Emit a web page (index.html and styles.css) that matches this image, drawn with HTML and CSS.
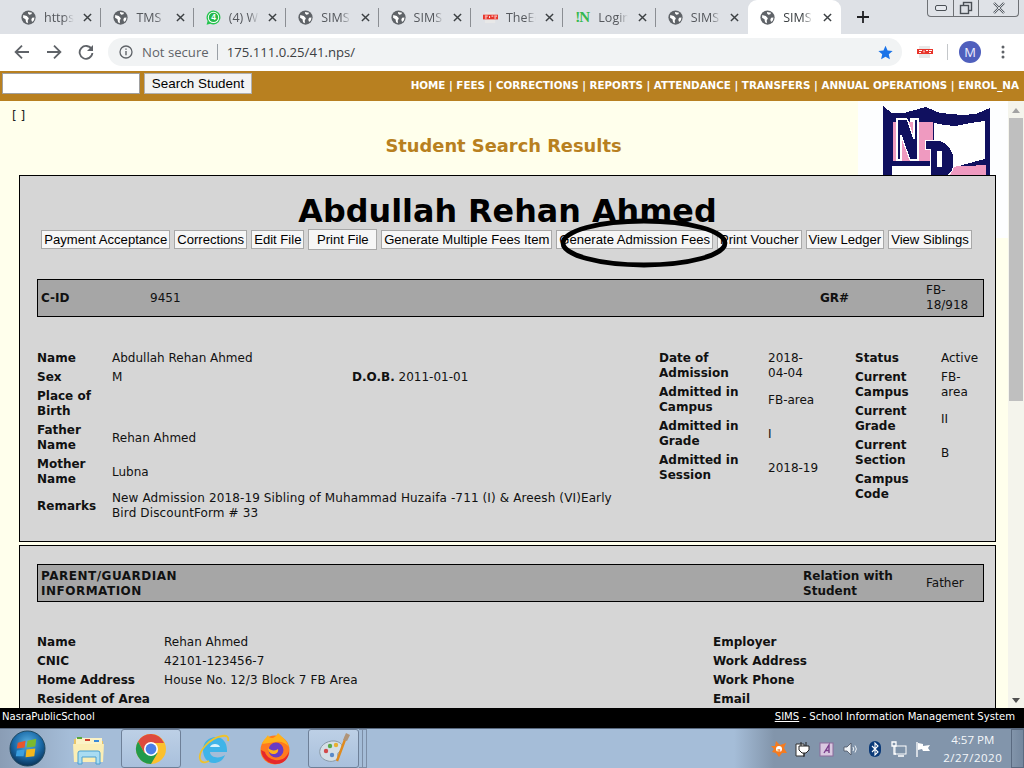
FILE: index.html
```html
<!DOCTYPE html>
<html lang="en">
<head>
<meta charset="utf-8">
<title>SIMS</title>
<link rel="stylesheet" href="styles.css">
</head>
<body>
<svg class="defs" width="0" height="0" aria-hidden="true">
  <defs>
    <symbol id="globe" viewBox="0 0 16 16">
      <circle cx="8" cy="8" r="7.6" fill="#5f6368"/>
      <path d="M2.400 5.400 6.200 6.400 8.400 8.800 7.200 11.200 7.400 14 5.400 13 4.800 9.800 2.200 8.200ZM7.400 2 11.800 2.800 11 4.400 8.800 5 7.600 3.800ZM11.800 8.200 14.400 8 13.800 10.800 11.800 12.800 11 10.400Z" fill="#fff"/>
    </symbol>
    <symbol id="close" viewBox="0 0 10 10">
      <path d="M1 1 9 9M9 1 1 9" stroke="#3c4043" stroke-width="1.600" fill="none"/>
    </symbol>
    <symbol id="pdf" viewBox="0 0 16 12">
      <rect x="2" y="0" width="11" height="12" fill="#e8e8e8"/>
      <rect x="0" y="3" width="16" height="5" fill="#e8352b"/>
      <path d="M2 4.500h3M2 6.500h2M7 4.500v2M9 4.500h2M12 4.500h3M12 6.500h2" stroke="#fff" stroke-width="1"/>
    </symbol>
  </defs>
</svg>

<header class="tabstrip">
  <div class="tab"><svg class="fav"><use href="#globe"/></svg><span class="tab-title">https:</span><svg class="x"><use href="#close"/></svg></div>
  <div class="tab"><svg class="fav"><use href="#globe"/></svg><span class="tab-title">TMS</span><svg class="x"><use href="#close"/></svg></div>
  <div class="tab"><svg class="fav" viewBox="0 0 16 16"><path d="M8 .4a7.500 7.500 0 0 0-6.300 11.400L.6 15.600l3.900-1A7.500 7.500 0 1 0 8 .4Z" fill="#25c44f"/><circle cx="8" cy="7.900" r="6" fill="#fff"/><circle cx="8" cy="7.900" r="5" fill="#25b84a"/><text x="8" y="11" class="wa-num">4</text></svg><span class="tab-title">(4) W</span><svg class="x"><use href="#close"/></svg></div>
  <div class="tab"><svg class="fav"><use href="#globe"/></svg><span class="tab-title">SIMS</span><svg class="x"><use href="#close"/></svg></div>
  <div class="tab"><svg class="fav"><use href="#globe"/></svg><span class="tab-title">SIMS</span><svg class="x"><use href="#close"/></svg></div>
  <div class="tab"><svg class="fav"><use href="#pdf"/></svg><span class="tab-title">TheEc</span><svg class="x"><use href="#close"/></svg></div>
  <div class="tab"><span class="fav in-logo">!N</span><span class="tab-title">Login</span><svg class="x"><use href="#close"/></svg></div>
  <div class="tab tab-last"><svg class="fav"><use href="#globe"/></svg><span class="tab-title">SIMS</span><svg class="x"><use href="#close"/></svg></div>
  <div class="tab tab-active"><svg class="fav"><use href="#globe"/></svg><span class="tab-title">SIMS</span><svg class="x"><use href="#close"/></svg></div>
  <svg class="newtab" viewBox="0 0 12 12"><path d="M6 0v12M0 6h12" stroke="#202124" stroke-width="1.800"/></svg>
  <div class="winctl">
    <span class="wbtn wmin"><svg viewBox="0 0 14 8"><rect x="1.500" y="1.500" width="11" height="5" rx="1.500" fill="#e6e9ee" stroke="#4a4f55"/></svg></span>
    <span class="wbtn wmax"><svg viewBox="0 0 14 14"><rect x="4.500" y="1.500" width="8" height="8" fill="none" stroke="#4a4f55" stroke-width="1.400"/><rect x="1.500" y="4.500" width="8" height="8" fill="#dee1e6" stroke="#4a4f55" stroke-width="1.400"/></svg></span>
    <span class="wbtn wclose"><svg viewBox="0 0 14 12"><path d="M2 1 12 11M12 1 2 11" stroke="#555b62" stroke-width="2.400"/><path d="M2 1 12 11M12 1 2 11" stroke="#e8eaed" stroke-width=".9"/></svg></span>
  </div>
</header>

<div class="toolbar">
  <svg class="tool" viewBox="0 0 16 16"><path d="M15 8H2M8 1.600 1.600 8 8 14.400" fill="none" stroke="#5f6368" stroke-width="1.800"/></svg>
  <svg class="tool" viewBox="0 0 16 16"><path d="M1 8h13M8 1.600 14.400 8 8 14.400" fill="none" stroke="#5f6368" stroke-width="1.800"/></svg>
  <svg class="tool" viewBox="0 0 16 16"><path d="M13.600 5.200A6.400 6.400 0 1 0 14.400 9" fill="none" stroke="#5f6368" stroke-width="1.800"/><path d="M15 1v6H9Z" fill="#5f6368"/></svg>
  <div class="omnibox">
    <svg class="info" viewBox="0 0 14 14"><circle cx="7" cy="7" r="6" fill="none" stroke="#5f6368" stroke-width="1.300"/><path d="M7 6v4.200M7 3.400v1.400" stroke="#5f6368" stroke-width="1.400"/></svg>
    <span class="notsecure">Not secure</span>
    <span class="omni-sep"></span>
    <span class="url">175.111.0.25/41.nps/</span>
    <svg class="star" viewBox="0 0 16 16"><path d="M8 .8 10.200 5.800 15.600 6.300 11.500 9.900 12.700 15.200 8 12.400 3.300 15.200 4.500 9.900.4 6.300 5.800 5.800Z" fill="#1a73e8"/></svg>
  </div>
  <svg class="ext"><use href="#pdf"/></svg>
  <span class="tool-sep"></span>
  <span class="avatar">M</span>
  <svg class="dots" viewBox="0 0 4 14"><circle cx="2" cy="2" r="1.500" fill="#5f6368"/><circle cx="2" cy="7" r="1.500" fill="#5f6368"/><circle cx="2" cy="12" r="1.500" fill="#5f6368"/></svg>
</div>

<nav class="appbar">
  <form class="search">
    <input class="search-input" type="text" aria-label="Search">
    <button class="search-btn" type="button">Search Student</button>
  </form>
  <div class="menu">HOME | FEES | CORRECTIONS | REPORTS | ATTENDANCE | TRANSFERS | ANNUAL OPERATIONS | ENROL_NA</div>
</nav>

<div class="viewport">
  <main class="content">
    <svg class="logo" viewBox="0 0 150 137" shape-rendering="crispEdges">
      <rect width="150" height="137" fill="#fdfeff"/>
      <path d="M25 5 34 12 46 12 68 6 82 12 104 14 118 13 132 7V110H25Z" fill="#10105f"/>
      <path d="M35 21H75V60H35Z" fill="#ef9ac0"/>
      <path d="M86 24 98 25 112 22 127 20V58L104 64 90 70 76 62V22Z" fill="#fff"/>
      <path d="M34 65H72V110H34Z" fill="#fff"/>
      <path d="M88 66 128 64V75H88Z" fill="#ef9ac0"/>
      <path d="M39 18H49L56 38V20H53V18H60V59H52L43 34V59H39Z" fill="#10105f" stroke="#fff" stroke-width="1.200"/>
      <path d="M67 39H80C90 41 96 50 96 60 96 72 90 76 82 76V110H72V48H67Z" fill="#10105f" stroke="#fff" stroke-width="1"/>
      <path d="M79 50H84V66H79Z" fill="#fff"/>
    </svg>

    <div class="brace">[ ]</div>
    <h2 class="page-title">Student Search Results</h2>

    <section class="card card-student">
      <h1 class="student-name">Abdullah Rehan Ahmed</h1>
      <div class="actions">
        <button class="btn" type="button">Payment Acceptance</button>
        <button class="btn" type="button">Corrections</button>
        <button class="btn" type="button">Edit File</button>
        <button class="btn btn-tall" type="button">Print File</button>
        <button class="btn" type="button">Generate Multiple Fees Item</button>
        <button class="btn" type="button">Generate Admission Fees</button>
        <button class="btn" type="button">Print Voucher</button>
        <button class="btn" type="button">View Ledger</button>
        <button class="btn" type="button">View Siblings</button>
      </div>

      <div class="headbar headbar-id">
        <b class="hb-label hb-cid">C-ID</b>
        <span class="hb-val hb-cidval">9451</span>
        <b class="hb-label hb-gr">GR#</b>
        <span class="hb-val hb-grval">FB-<br>18/918</span>
      </div>

      <div class="details">
        <table class="info info-left">
          <colgroup><col class="c-lab"><col class="c-sex"><col></colgroup>
          <tr><th>Name</th><td colspan="2">Abdullah Rehan Ahmed</td></tr>
          <tr><th>Sex</th><td>M</td><td><b>D.O.B.</b> 2011-01-01</td></tr>
          <tr><th>Place of Birth</th><td colspan="2"></td></tr>
          <tr><th>Father Name</th><td colspan="2">Rehan Ahmed</td></tr>
          <tr><th>Mother Name</th><td colspan="2">Lubna</td></tr>
          <tr><th>Remarks</th><td colspan="2" class="wide-text">New Admission 2018-19 Sibling of Muhammad Huzaifa -711 (I) &amp; Areesh (VI)Early Bird DiscountForm # 33</td></tr>
        </table>
        <table class="info info-mid">
          <tr><th>Date of Admission</th><td>2018-04-04</td></tr>
          <tr><th>Admitted in Campus</th><td>FB-area</td></tr>
          <tr><th>Admitted in Grade</th><td>I</td></tr>
          <tr><th>Admitted in Session</th><td>2018-19</td></tr>
        </table>
        <table class="info info-right">
          <tr><th>Status</th><td>Active</td></tr>
          <tr><th>Current Campus</th><td>FB-area</td></tr>
          <tr><th>Current Grade</th><td>II</td></tr>
          <tr><th>Current Section</th><td>B</td></tr>
          <tr><th>Campus Code</th><td></td></tr>
        </table>
      </div>
      <svg class="circle-mark" viewBox="0 0 168 50"><ellipse cx="84" cy="25" rx="81" ry="22" fill="none" stroke="#000" stroke-width="4.800"/></svg>
    </section>

    <section class="card card-parent">
      <div class="headbar headbar-parent">
        <b class="hb-label hb-parent">PARENT/GUARDIAN INFORMATION</b>
        <b class="hb-label hb-rel">Relation with Student</b>
        <span class="hb-val hb-relval">Father</span>
      </div>
      <div class="details details-parent">
        <table class="info info-pleft">
          <tr><th>Name</th><td>Rehan Ahmed</td></tr>
          <tr><th>CNIC</th><td>42101-123456-7</td></tr>
          <tr><th>Home Address</th><td class="wide-text">House No. 12/3 Block 7 FB Area</td></tr>
          <tr><th>Resident of Area</th><td></td></tr>
        </table>
        <table class="info info-pright">
          <tr><th>Employer</th><td></td></tr>
          <tr><th>Work Address</th><td></td></tr>
          <tr><th>Work Phone</th><td></td></tr>
          <tr><th>Email</th><td></td></tr>
        </table>
      </div>
    </section>
  </main>
  <aside class="scrollbar">
    <span class="arrow-up"></span>
    <span class="thumb"></span>
    <span class="arrow-down"></span>
  </aside>
</div>

<footer class="sitefoot">
  <span>NasraPublicSchool</span>
  <span><u>SIMS</u> - School Information Management System</span>
</footer>

<div class="taskbar">
  <svg class="orb" viewBox="0 0 38 38">
    <defs>
      <radialGradient id="orbg" cx="50%" cy="35%" r="65%"><stop offset="0" stop-color="#5ab0e0"/><stop offset=".6" stop-color="#1a6aa8"/><stop offset="1" stop-color="#0b3358"/></radialGradient>
    </defs>
    <circle cx="19" cy="19" r="18" fill="url(#orbg)" stroke="#20485f"/>
    <path d="M9 13 17 11 16 18 8 19Z" fill="#e8562d"/>
    <path d="M19 11 28 9 27 17 18 18Z" fill="#7bb92f"/>
    <path d="M8 21 16 20 15 27 7 27Z" fill="#3a9fe0"/>
    <path d="M18 20 27 19 26 27 17 28Z" fill="#f3b71c"/>
  </svg>
  <span class="tb-item tb-folder"><svg class="tb-icon" viewBox="0 0 32 32">
    <path d="M1 6h12l2 2h15v21H1Z" fill="#e9c569"/>
    <rect x="3" y="5" width="26" height="8" fill="#fbf3c6"/>
    <rect x="4" y="4" width="5" height="2" fill="#58a83a"/><rect x="12" y="6" width="5" height="2" fill="#d2402c"/><rect x="21" y="7" width="5" height="2" fill="#3a8ad8"/>
    <path d="M0 11h31l-1 18H1Z" fill="#fbeeb5"/>
    <path d="M5 31V20q0-2 2-2h18q2 0 2 2v11h-4V24H9v7Z" fill="#a9dcf2" stroke="#4a9fd0"/>
  </svg></span>
  <span class="tb-item tb-open tb-chrome"><svg class="tb-icon" viewBox="0 0 32 32">
    <circle cx="16" cy="16" r="15" fill="#fbc02d"/>
    <path d="M16 1A15 15 0 0 0 3 8.500L9.500 20 16 10H29A15 15 0 0 0 16 1Z" fill="#dd4b3e"/>
    <path d="M3 8.500A15 15 0 0 0 16 31L22.500 20H9.500Z" fill="#229a4a"/>
    <circle cx="16" cy="16" r="7" fill="#fff"/><circle cx="16" cy="16" r="5.400" fill="#4a7fe8"/>
  </svg></span>
  <span class="tb-item tb-ie"><svg class="tb-icon" viewBox="0 0 32 32">
    <path d="M5 17C5 9 11 4 18 4s11 6 11 13v2H12c0 6 10 7 15 3-2 6-7 8-11 8C9 30 5 24 5 17Z" fill="#3fb4e8"/>
    <path d="M12 14c1-4 9-4 10 0Z" fill="#d8f2fc"/>
    <path d="M2 26C0 18 12 5 24 3c5-1 7 1 6 5" fill="none" stroke="#eec22c" stroke-width="1.800"/>
    <path d="M2 26c1 4 5 4 9 2" fill="none" stroke="#eec22c" stroke-width="1.800"/>
  </svg></span>
  <span class="tb-item tb-ff"><svg class="tb-icon" viewBox="0 0 32 32">
    <circle cx="16" cy="17" r="14.500" fill="#ff7a1f"/>
    <path d="M3 11C5 6 8 4 9 2c1 3 3 3 5 3 4-2 4-4 5-5 3 3 9 7 11 14-3-4-8-6-13-5Z" fill="#ffb21c"/>
    <path d="M2 17c1 10 9 14 15 14 8 0 13-6 13-13-2 7-8 10-14 9-5-1-9-4-10-8Z" fill="#e5282c"/>
    <circle cx="17" cy="17" r="7.500" fill="#6b3bc4"/>
    <path d="M9 15c3 3 8 3 10 1 1 3-2 5-4 5-3 0-6-2-6-6Z" fill="#ffb21c"/>
  </svg></span>
  <span class="tb-item tb-open tb-paint"><svg class="tb-icon" viewBox="0 0 32 32">
    <path d="M2 21C0 14 8 7 17 8c6 1 9 5 6 9-3 3-4 3-3 7-1 4-6 5-10 4-4-1-7-3-8-7Z" fill="#d5dfe6" stroke="#8a9aa8"/>
    <circle cx="8" cy="18" r="2.200" fill="#d24a4a"/><circle cx="12" cy="13" r="2.200" fill="#5aa84a"/><circle cx="18" cy="12" r="2.200" fill="#e8b030"/><circle cx="14" cy="22" r="2.200" fill="#5a8ac8"/>
    <path d="M28 4 19 28" stroke="#e08a1e" stroke-width="2.400"/>
    <path d="M25 7 28 0 32 2 29 8Z" fill="#b09478"/>
  </svg></span>
  <span class="tb-grip"></span>
  <span class="tb-grip"></span>
  <div class="tray">
    <svg class="tray-ico" viewBox="0 0 16 16"><path d="M0 5 4 5 5 0 9 4 15 2 13 7 16 12 11 12 8 16 5 12 1 11 3 8Z" fill="#f47b20"/><circle cx="8" cy="8" r="3" fill="#fff"/><text x="8" y="10.500" class="av-a">a</text></svg>
    <svg class="tray-ico" viewBox="0 0 16 16"><path d="M1 3h8v12H1Z" fill="#fff" stroke="#333"/><path d="M6 1v4M11 1v4M4 5h10v4l-3 3H7L4 9ZM9 12v4" fill="#fff" stroke="#222"/></svg>
    <svg class="tray-ico" viewBox="0 0 16 16"><rect x="1" y="2" width="13" height="13" fill="#d9c8e0" stroke="#8c6a9c"/><path d="M5 12 10 4 10 12M6.500 9.500h4" stroke="#7a3f8c" fill="none" stroke-width="1.400"/></svg>
    <svg class="tray-ico" viewBox="0 0 16 16"><path d="M1 6h3l4-4v12l-4-4H1Z" fill="#eef2f6" stroke="#4a5260" stroke-width=".8"/><path d="M10 6q1.500 2 0 4M12 4.500q2.800 3.500 0 7" stroke="#eef2f6" fill="none"/></svg>
    <svg class="tray-ico" viewBox="0 0 16 16"><rect x="2" y="0" width="12" height="16" rx="6" fill="#0a3a78"/><path d="M5 5 11 11 8 14V2L11 5 5 11" stroke="#fff" fill="none" stroke-width="1.100"/></svg>
    <svg class="tray-ico" viewBox="0 0 16 16"><rect x="4" y="5" width="11" height="8" fill="#7f93a9" stroke="#fff"/><path d="M1 1h4v4H1ZM3 5v8h2M7 15h6" stroke="#fff" fill="none" stroke-width="1.300"/></svg>
    <svg class="tray-ico" viewBox="0 0 16 16"><path d="M2 1v15" stroke="#fff" stroke-width="1.300"/><path d="M3 2 8 3 8 5 15 4 13 7 15 10 8 10 7 8 3 9Z" fill="#fff"/></svg>
    <div class="clock"><span>4:57 PM</span><span class="clock-date">2/27/2020</span></div>
    <span class="showdesk"></span>
  </div>
</div>
</body>
</html>
```
FILE: styles.css
```css
* { box-sizing: border-box; }
html, body { margin: 0; padding: 0; }
body {
  width: 1024px;
  height: 768px;
  overflow: hidden;
  display: flex;
  flex-direction: column;
  font-family: "DejaVu Sans", sans-serif;
  background: #fff;
}
.defs { position: absolute; }

/* Browser tabs */
.tabstrip {
  height: 34px;
  flex: none;
  display: flex;
  align-items: stretch;
  padding-left: 9px;
  background: #dee1e6;
  position: relative;
}
.tab {
  width: 92.4px;
  display: flex;
  align-items: center;
  padding: 0 9px 0 12px;
  position: relative;
  font: 12.5px "Open Sans", sans-serif;
  color: #55585d;
}
.tab::after {
  content: "";
  position: absolute;
  right: 0;
  top: 8px;
  height: 19px;
  width: 1px;
  background: #8b8e93;
}
.tab-last::after, .tab-active::after { display: none; }
.tab-active {
  background: #fff;
  border-radius: 9px 9px 0 0;
  color: #3c4043;
}
.fav { width: 15px; height: 15px; flex: none; }
.wa-num { font: bold 9px "Liberation Sans", sans-serif; fill: #fff; text-anchor: middle; }
.in-logo {
  font: bold 15px/15px "Liberation Serif", serif;
  color: #35b84d;
  letter-spacing: -1px;
  white-space: nowrap;
}
.tab-title {
  width: 30px;
  margin-left: 8px;
  overflow: hidden;
  white-space: nowrap;
  -webkit-mask-image: linear-gradient(90deg, #000 65%, transparent 100%);
  mask-image: linear-gradient(90deg, #000 65%, transparent 100%);
}
.x { width: 9px; height: 9px; margin-left: auto; flex: none; }
.newtab { width: 12px; height: 12px; align-self: center; margin-left: 16px; }
.winctl {
  position: absolute;
  top: 0;
  left: 927px;
  width: 92px;
  height: 17px;
  display: flex;
  border: 1px solid #6e7175;
  border-top: 0;
  border-radius: 0 0 4px 4px;
  background: #dfe2e7;
}
.wbtn { display: flex; align-items: center; justify-content: center; border-right: 1px solid #6e7175; }
.wbtn:last-child { border-right: 0; }
.wmin { width: 26px; }
.wmin svg { width: 14px; height: 8px; }
.wmax { width: 25px; }
.wmax svg { width: 14px; height: 14px; }
.wclose { flex: 1; }
.wclose svg { width: 14px; height: 12px; }

/* Browser toolbar */
.toolbar {
  height: 37px;
  flex: none;
  display: flex;
  align-items: center;
  padding: 0 0 1px 14px;
  background: #fff;
}
.tool { width: 16px; height: 16px; margin-right: 16px; flex: none; }
.omnibox {
  width: 794px;
  height: 28px;
  margin-left: -2px;
  display: flex;
  align-items: center;
  padding: 0 9px 0 11px;
  border-radius: 14px;
  background: #f1f3f4;
  font: 13.15px "Open Sans", sans-serif;
}
.info { width: 14px; height: 14px; flex: none; }
.notsecure { margin-left: 9px; color: #5f6368; white-space: nowrap; }
.omni-sep { width: 1px; height: 16px; margin: 0 9px 0 8px; background: #9aa0a6; }
.url { color: #3c4043; white-space: nowrap; }
.star { width: 15px; height: 15px; margin-left: auto; }
.ext { width: 16px; height: 12px; margin-left: 15px; flex: none; }
.tool-sep { width: 1px; height: 16px; margin-left: 14px; background: #c4c7ca; }
.avatar {
  width: 22px;
  height: 22px;
  margin-left: 11px;
  flex: none;
  display: flex;
  align-items: center;
  justify-content: center;
  border-radius: 50%;
  background: #4f5fbd;
  color: #eef;
  font: 13px "Open Sans", sans-serif;
}
.dots { width: 4px; height: 14px; margin-left: 20px; flex: none; }

/* App bar */
.appbar {
  height: 30px;
  flex: none;
  display: flex;
  align-items: center;
  justify-content: space-between;
  padding: 0 0 5px 2px;
  background: #b88020;
  overflow: hidden;
}
.search { display: flex; gap: 4px; margin: 0; }
.search-input {
  width: 138px;
  height: 21px;
  margin: 0;
  padding: 0;
  border: 1px solid #a0a0a0;
  background: #fff;
}
.search-btn {
  width: 108px;
  height: 21px;
  margin: 0;
  padding: 0;
  border: 1px solid #b0b0b0;
  background: #f3f3f3;
  color: #000;
  font: 13.4px "Liberation Sans", sans-serif;
}
.menu {
  flex: none;
  padding: 3px 5px 0 0;
  color: #fff;
  font-weight: bold;
  font-size: 10.33px;
  white-space: nowrap;
}

/* Page body */
.viewport {
  height: 607px;
  flex: none;
  display: flex;
  background: #ffffec;
}
.content {
  width: 1008px;
  position: relative;
  overflow: hidden;
  padding: 0 12px 0 19px;
}
.logo {
  position: absolute;
  top: 0;
  left: 858px;
  width: 150px;
  height: 137px;
}
.brace {
  position: relative;
  margin: 8px 0 0 -7px;
  font-size: 12px;
  line-height: 15px;
  color: #222;
}
.page-title {
  position: relative;
  margin: 11px 0 0;
  width: 969px;
  text-align: center;
  color: #b88020;
  font-size: 17.85px;
  line-height: 22px;
  font-weight: bold;
}
.card {
  position: relative;
  width: 977px;
  border: 1px solid #000;
  background: #d6d6d6;
}
.card-student { height: 367px; margin-top: 18px; padding: 15px 11px 0 17px; }
.card-parent { margin-top: 3px; height: 200px; padding: 18px 11px 0 17px; }
.student-name {
  margin: 0;
  text-align: center;
  font-size: 31.8px;
  line-height: 40px;
  font-weight: bold;
  color: #000;
  padding-right: 6px;
}
.actions {
  display: flex;
  justify-content: center;
  align-items: center;
  gap: 4px;
  height: 22px;
  margin: -3px -11px 0 -17px;
  padding-right: 2px;
}
.btn {
  height: 19px;
  margin: 0;
  padding: 0 2px;
  border: 1px solid #a8a8a8;
  background: #f6f6f6;
  color: #000;
  font: 13.1px "Liberation Sans", sans-serif;
  white-space: nowrap;
}
.btn-tall { height: 21px; padding: 0 7.5px; }
.headbar {
  display: flex;
  align-items: center;
  height: 38px;
  border: 1px solid #000;
  background: #a6a6a6;
  padding: 0 14px 0 3px;
  font-size: 12px;
  line-height: 15px;
  color: #111;
}
.headbar-id { margin-top: 29px; }
.hb-label { flex: none; }
.hb-val { flex: none; }
.hb-cid { width: 109px; }
.hb-cidval { width: 670px; }
.hb-gr { width: 106px; }
.hb-parent { width: 762px; padding: 2px 600px 0 0; letter-spacing: .5px; }
.hb-rel { width: 123px; padding-top: 2px; }
.details { display: flex; margin-top: 32px; }
.details-parent { margin-top: 31px; }
.info {
  border-collapse: collapse;
  table-layout: fixed;
  font-size: 12px;
  line-height: 15px;
  color: #111;
}
.info th, .info td {
  padding: 2px 0;
  font-weight: normal;
  text-align: left;
  vertical-align: middle;
}
.info th { font-weight: bold; }
.info b { font-weight: bold; }
.info td.wide-text { letter-spacing: .12px; }
.info-left { width: 590px; margin-right: 32px; align-self: flex-start; }
.c-lab { width: 75px; }
.c-sex { width: 240px; }
.info-mid { width: 161px; margin-right: 35px; align-self: flex-start; }
.info-mid th { width: 109px; }
.info-right { width: 130px; align-self: flex-start; }
.info-right th { width: 86px; }
.info-pleft { width: 676px; align-self: flex-start; }
.info-pleft th { width: 127px; }
.info-pright { width: 260px; align-self: flex-start; }
.info-pright th { width: 150px; }
.circle-mark {
  position: absolute;
  left: 540px;
  top: 42px;
  width: 168px;
  height: 50px;
}

/* Page scrollbar */
.scrollbar {
  width: 16px;
  flex: none;
  display: flex;
  flex-direction: column;
  align-items: center;
  background: #f4f4ec;
}
.arrow-up {
  margin-top: 7px;
  border: 4px solid transparent;
  border-top: 0;
  border-bottom: 5px solid #a3a3a3;
}
.thumb { width: 14px; height: 283px; margin-top: 5px; background: #bfbfbf; }
.arrow-down {
  margin-top: auto;
  margin-bottom: 5px;
  border: 4px solid transparent;
  border-bottom: 0;
  border-top: 5px solid #505050;
}

/* Site footer */
.sitefoot {
  height: 20px;
  flex: none;
  display: flex;
  align-items: center;
  justify-content: space-between;
  padding: 0 9px 3px 2px;
  background: #000;
  color: #fff;
  font-size: 10.1px;
  white-space: nowrap;
}

/* Windows taskbar */
.taskbar {
  height: 40px;
  flex: none;
  display: flex;
  align-items: center;
  padding-left: 9px;
  background: linear-gradient(90deg, #8a9db5 0, #a5bdd8 70px, #a5bdd8 100%);
  border-top: 1px solid #5a6a80;
}
.orb { width: 37px; height: 37px; flex: none; }
.tb-item {
  height: 39px;
  flex: none;
  display: flex;
  align-items: center;
  justify-content: center;
}
.tb-folder { width: 64px; margin-left: 11px; }
.tb-chrome { width: 60px; }
.tb-ie { width: 66px; }
.tb-ff { width: 61px; padding-right: 5px; }
.tb-paint { width: 51px; }
.tb-open {
  border: 1px solid #6e8098;
  border-radius: 3px;
  background: linear-gradient(#bdd0e6, #a9c0dc);
}
.tb-icon { width: 32px; height: 32px; }
.tb-grip { width: 4px; height: 39px; border: 1px solid #7c8ea6; border-left: 0; }
.tray {
  margin-left: auto;
  width: 290px;
  height: 39px;
  display: flex;
  align-items: center;
  gap: 8px;
  padding-left: 37px;
  background: linear-gradient(90deg, #a5bdd8 0, #8295ab 40px);
}
.tray-ico { width: 16px; height: 16px; flex: none; }
.av-a { font: bold 6px "Liberation Sans", sans-serif; fill: #f47b20; text-anchor: middle; }
.clock {
  width: 70px;
  margin-left: 3px;
  display: flex;
  flex-direction: column;
  align-items: center;
  gap: 3px;
  color: #f4f7fa;
  font: 11.5px/15px "Open Sans", sans-serif;
}
.clock-date { letter-spacing: .5px; }
.showdesk {
  width: 14px;
  height: 39px;
  margin-left: auto;
  border: 1px solid #5a6a80;
  background: linear-gradient(90deg, #8294aa, #74879e);
}
```
